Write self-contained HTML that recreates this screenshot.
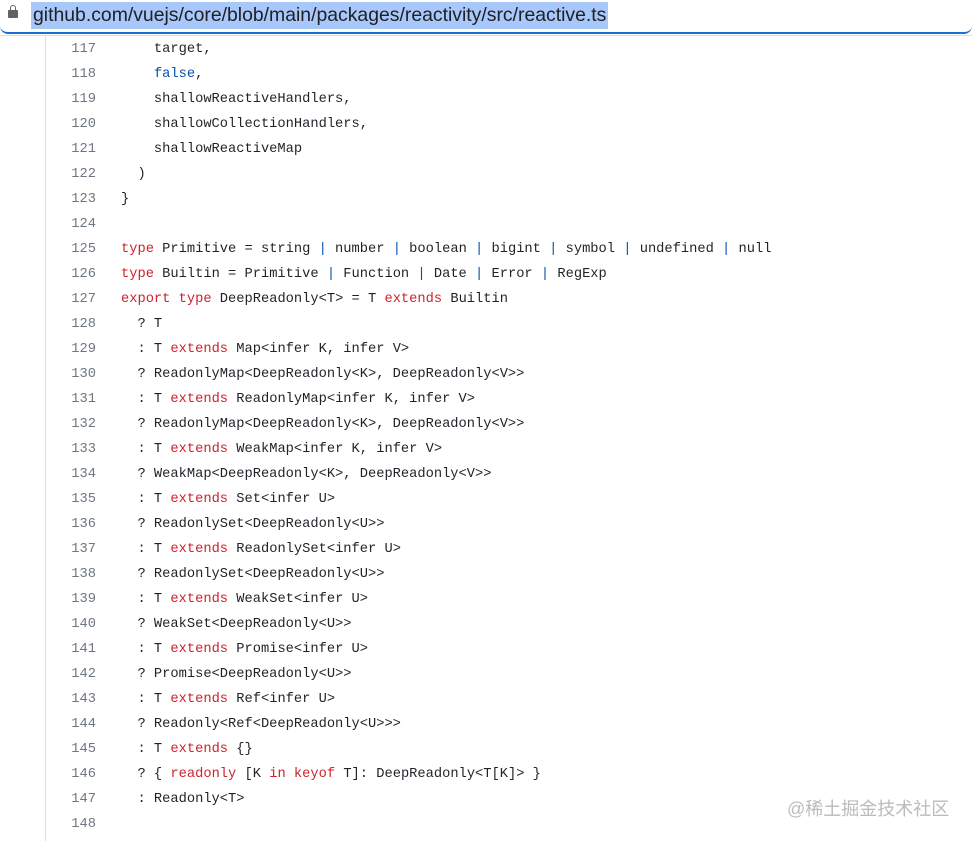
<!DOCTYPE html>
<html><head><meta charset="utf-8"><style>
body{margin:0;width:972px;height:841px;overflow:hidden;background:#fff;position:relative;font-family:"Liberation Sans",sans-serif}
.bar{position:absolute;left:0;top:0;width:972px;height:32px;background:#fff;border-bottom:2px solid #1a6fd0;border-radius:0 0 8px 8px}
.url{position:absolute;left:31px;top:2px;height:27px;line-height:27px;font-size:19.4px;color:#202124;background:#a8c7fa;padding:0 2px}
.lock{position:absolute;left:8px;top:10px;width:10px;height:8px;background:#5f6368;border-radius:1px}
.lock:before{content:"";position:absolute;left:2px;top:-5px;width:4px;height:5px;border:1.5px solid #5f6368;border-bottom:none;border-radius:3px 3px 0 0}
.sep{position:absolute;left:0;top:35px;width:972px;height:1px;background:#ddd}
.vl{position:absolute;left:45px;top:36px;width:1px;height:805px;background:#d8dee4}
.code{position:absolute;left:0;top:37px;font-family:"Liberation Mono",monospace;font-size:13.73px;color:#1f2328}
.l{height:25px;line-height:25px;white-space:pre;position:relative}
.n{position:absolute;left:50px;width:46px;text-align:right;color:#6e7781}
.t{position:absolute;left:121px}
.k{color:#cf222e}.b{color:#0550ae}.p{color:#6e7781}
.wm{position:absolute;left:787px;top:795px;font-size:18px;color:#bbb;font-family:"Liberation Sans","Noto Sans CJK SC",sans-serif}
</style></head><body>
<div class="bar"><div class="lock"></div><div class="url">github.com/vuejs/core/blob/main/packages/reactivity/src/reactive.ts</div></div>
<div class="sep"></div><div class="vl"></div>
<div class="code">
<div class="l"><span class="n">117</span><span class="t">    target,</span></div>
<div class="l"><span class="n">118</span><span class="t">    <span class="b">false</span>,</span></div>
<div class="l"><span class="n">119</span><span class="t">    shallowReactiveHandlers,</span></div>
<div class="l"><span class="n">120</span><span class="t">    shallowCollectionHandlers,</span></div>
<div class="l"><span class="n">121</span><span class="t">    shallowReactiveMap</span></div>
<div class="l"><span class="n">122</span><span class="t">  )</span></div>
<div class="l"><span class="n">123</span><span class="t">}</span></div>
<div class="l"><span class="n">124</span><span class="t"></span></div>
<div class="l"><span class="n">125</span><span class="t"><span class="k">type</span> Primitive = string <span class="b">|</span> number <span class="b">|</span> boolean <span class="b">|</span> bigint <span class="b">|</span> symbol <span class="b">|</span> undefined <span class="b">|</span> null</span></div>
<div class="l"><span class="n">126</span><span class="t"><span class="k">type</span> Builtin = Primitive <span class="b">|</span> Function <span class="b">|</span> Date <span class="b">|</span> Error <span class="b">|</span> RegExp</span></div>
<div class="l"><span class="n">127</span><span class="t"><span class="k">export</span> <span class="k">type</span> DeepReadonly&lt;T&gt; = T <span class="k">extends</span> Builtin</span></div>
<div class="l"><span class="n">128</span><span class="t">  ? T</span></div>
<div class="l"><span class="n">129</span><span class="t">  : T <span class="k">extends</span> Map&lt;infer K, infer V&gt;</span></div>
<div class="l"><span class="n">130</span><span class="t">  ? ReadonlyMap&lt;DeepReadonly&lt;K&gt;, DeepReadonly&lt;V&gt;&gt;</span></div>
<div class="l"><span class="n">131</span><span class="t">  : T <span class="k">extends</span> ReadonlyMap&lt;infer K, infer V&gt;</span></div>
<div class="l"><span class="n">132</span><span class="t">  ? ReadonlyMap&lt;DeepReadonly&lt;K&gt;, DeepReadonly&lt;V&gt;&gt;</span></div>
<div class="l"><span class="n">133</span><span class="t">  : T <span class="k">extends</span> WeakMap&lt;infer K, infer V&gt;</span></div>
<div class="l"><span class="n">134</span><span class="t">  ? WeakMap&lt;DeepReadonly&lt;K&gt;, DeepReadonly&lt;V&gt;&gt;</span></div>
<div class="l"><span class="n">135</span><span class="t">  : T <span class="k">extends</span> Set&lt;infer U&gt;</span></div>
<div class="l"><span class="n">136</span><span class="t">  ? ReadonlySet&lt;DeepReadonly&lt;U&gt;&gt;</span></div>
<div class="l"><span class="n">137</span><span class="t">  : T <span class="k">extends</span> ReadonlySet&lt;infer U&gt;</span></div>
<div class="l"><span class="n">138</span><span class="t">  ? ReadonlySet&lt;DeepReadonly&lt;U&gt;&gt;</span></div>
<div class="l"><span class="n">139</span><span class="t">  : T <span class="k">extends</span> WeakSet&lt;infer U&gt;</span></div>
<div class="l"><span class="n">140</span><span class="t">  ? WeakSet&lt;DeepReadonly&lt;U&gt;&gt;</span></div>
<div class="l"><span class="n">141</span><span class="t">  : T <span class="k">extends</span> Promise&lt;infer U&gt;</span></div>
<div class="l"><span class="n">142</span><span class="t">  ? Promise&lt;DeepReadonly&lt;U&gt;&gt;</span></div>
<div class="l"><span class="n">143</span><span class="t">  : T <span class="k">extends</span> Ref&lt;infer U&gt;</span></div>
<div class="l"><span class="n">144</span><span class="t">  ? Readonly&lt;Ref&lt;DeepReadonly&lt;U&gt;&gt;&gt;</span></div>
<div class="l"><span class="n">145</span><span class="t">  : T <span class="k">extends</span> {}</span></div>
<div class="l"><span class="n">146</span><span class="t">  ? { <span class="k">readonly</span> [K <span class="k">in</span> <span class="k">keyof</span> T]: DeepReadonly&lt;T[K]&gt; }</span></div>
<div class="l"><span class="n">147</span><span class="t">  : Readonly&lt;T&gt;</span></div>
<div class="l"><span class="n">148</span><span class="t"></span></div>
</div>
<div class="wm">@稀土掘金技术社区</div>
</body></html>
